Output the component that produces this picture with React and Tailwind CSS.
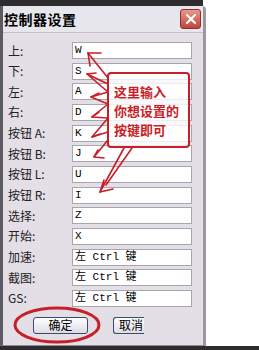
import React from 'react';

const rows = [
  ['上:', 'W'],
  ['下:', 'S'],
  ['左:', 'A'],
  ['右:', 'D'],
  ['按钮 A:', 'K'],
  ['按钮 B:', 'J'],
  ['按钮 L:', 'U'],
  ['按钮 R:', 'I'],
  ['选择:', 'Z'],
  ['开始:', 'X'],
  ['加速:', '左 Ctrl 键'],
  ['截图:', '左 Ctrl 键'],
  ['GS:', '左 Ctrl 键'],
];

const cjk = { fontFamily: '"Noto Sans CJK SC", "DejaVu Sans", sans-serif' };
const mono = { fontFamily: '"Liberation Mono", "Noto Sans CJK SC", monospace' };

const Annotations = () => (
  <svg
    className="absolute left-0 top-0 pointer-events-none"
    width="259"
    height="350"
    viewBox="0 0 259 350"
    fill="none"
    stroke="#c81e28"
    strokeWidth="1.6"
    strokeLinejoin="round"
    strokeLinecap="round"
  >
    {/* zigzag arrows to each input */}
    <polyline points="108,78 88,53" />
    <polyline points="88,53 101,53" />
    <polyline points="88,53 90,66" />
    <polyline points="108,84 87,74 108,92" />
    <polyline points="87,74 96,73" />
    <polyline points="108,92 91,97 108,104" />
    <polyline points="91,97 99,93" />
    <polyline points="108,104 92,117 108,118" />
    <polyline points="92,117 99,112" />
    <polyline points="108,118 92,137 108,132" />
    <polyline points="92,137 100,134" />
    <polyline points="108,140 94,157 104,158" />
    <polyline points="94,157 98,150" />
    <polyline points="124,148 100,192 104,180" />
    <polyline points="100,192 113,189" />
    <polyline points="132,148 106,185" />
    {/* ellipse round the OK button */}
    <ellipse cx="57" cy="325" rx="42" ry="17" strokeWidth="3" />
  </svg>
);

export default function App() {
  return (
    <div className="relative w-[259px] h-[350px] bg-white overflow-hidden">
      <div className="h-[6px] w-[203px] bg-[#2e2c2e]" />
      <div className="w-[206px] h-[340px] flex flex-col border-l-[3px] border-l-[#5a5a60] border-r-[3px] border-r-[#9a97a0] border-b border-b-[#8a8890] rounded-tr-[4px] bg-[#e4dee7]">
        {/* title bar */}
        <div className="h-[27px] flex items-center justify-between pl-[1px] pr-[2px] bg-[#e6e6ec] border-b border-b-[#c4c0c8]">
          <span className="text-[14px] font-bold text-black leading-none tracking-[0.5px]" style={cjk}>
            控制器设置
          </span>
          <div className="w-[21px] h-[20px] rounded-[3px] border border-[#8c3030] bg-gradient-to-b from-[#e8968c] to-[#c0443c] flex items-center justify-center">
            <svg width="12" height="12" viewBox="0 0 12 12" stroke="white" strokeWidth="2.2" strokeLinecap="round">
              <path d="M2 2 L10 10 M10 2 L2 10" />
            </svg>
          </div>
        </div>
        {/* fields */}
        <div className="flex flex-col gap-[3.67px] pt-[9px] pl-[5px]">
          {rows.map(([label, value]) => (
            <div key={label} className="flex items-center h-[17px]">
              <span className="w-[64px] text-[12px] text-[#222] leading-none" style={cjk}>
                {label}
              </span>
              <div className="w-[120px] h-[17px] bg-white border border-[#a8a6ac] flex items-center pl-[2px] text-[11px] text-black leading-none" style={mono}>
                {value}
              </div>
            </div>
          ))}
        </div>
        {/* buttons */}
        <div className="flex items-center mt-[10px] pl-[30px]">
          <div className="w-[55px] h-[17px] rounded-[3px] border border-[#3c4a70] bg-gradient-to-b from-[#ffffff] to-[#dcdce4] flex items-center justify-center text-[12px] text-black" style={cjk}>
            确定
          </div>
          <div className="ml-[25px] w-[31px] h-[17px] overflow-hidden rounded-l-[3px] border-y border-l border-[#3c4a70] bg-gradient-to-b from-[#ffffff] to-[#dcdce4] flex items-center pl-[5px] text-[12px] text-black whitespace-nowrap" style={cjk}>
            取消
          </div>
        </div>
      </div>
      <div className="h-[4px] w-full bg-[#2e2c2e]" />

      {/* callout */}
      <div className="absolute left-[107px] top-[72px] w-[83px] h-[76px] border-2 border-[#c81e28] rounded-[4px] bg-white/80 flex flex-col justify-center pl-[5px] text-[13px] font-bold text-[#c81e28] leading-[19px]" style={cjk}>
        <span>这里输入</span>
        <span>你想设置的</span>
        <span>按键即可</span>
      </div>
      <Annotations />
    </div>
  );
}
